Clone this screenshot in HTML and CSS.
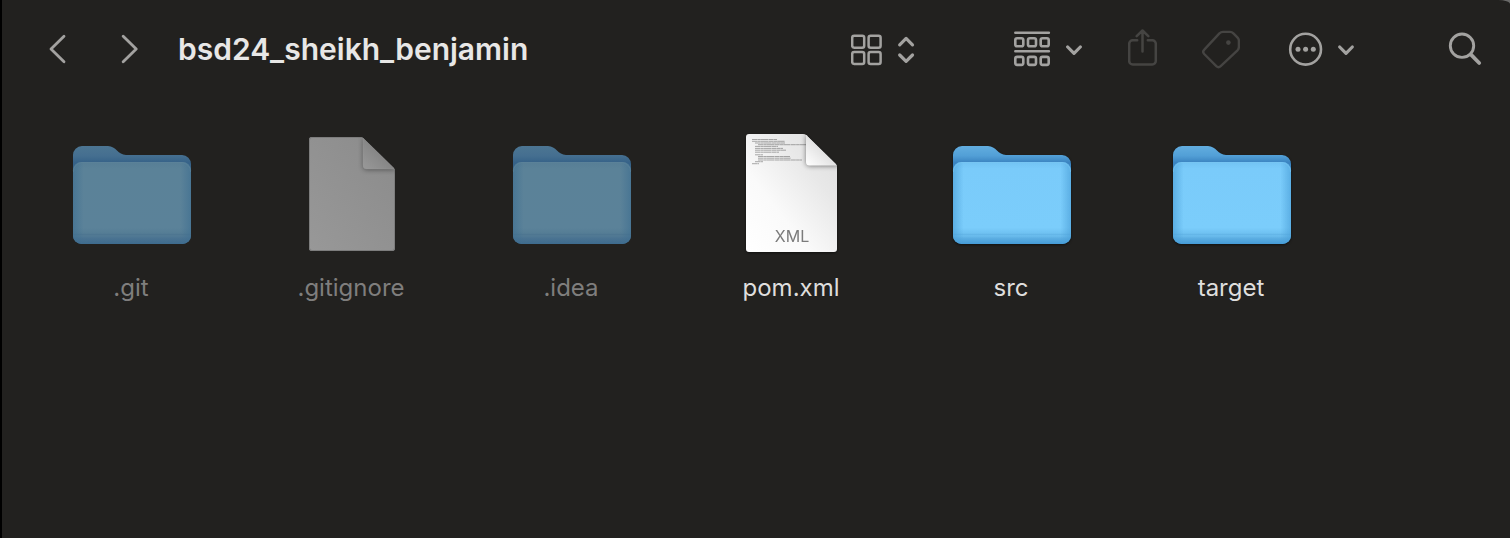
FILE: index.html
```html
<!DOCTYPE html>
<html lang="en">
<head>
<meta charset="utf-8">
<title>bsd24_sheikh_benjamin</title>
<link rel="stylesheet" href="styles.css">
</head>
<body>
<svg class="defs" aria-hidden="true">
  <defs>
    <linearGradient id="folder-back" x1="0" y1="0" x2="0" y2="1">
      <stop offset="0" stop-color="#62addf"/>
      <stop offset=".1" stop-color="#529fd6"/>
      <stop offset=".17" stop-color="#3a83c0"/>
      <stop offset="1" stop-color="#3a8ccb"/>
    </linearGradient>
    <linearGradient id="folder-front" x1="0" y1="0" x2="0" y2="1">
      <stop offset="0" stop-color="#72c3f3"/>
      <stop offset=".08" stop-color="#7acbfa"/>
      <stop offset=".8" stop-color="#7bcdfb"/>
      <stop offset=".87" stop-color="#6fc1f1"/>
      <stop offset=".88" stop-color="#62b4e6"/>
      <stop offset=".9" stop-color="#6bbdee"/>
      <stop offset=".93" stop-color="#5caee2"/>
      <stop offset="1" stop-color="#459bd6"/>
    </linearGradient>
    <linearGradient id="folder-sides">
      <stop offset="0" stop-color="#4a9fd8" stop-opacity=".65"/>
      <stop offset=".09" stop-color="#4a9fd8" stop-opacity="0"/>
      <stop offset=".91" stop-color="#4a9fd8" stop-opacity="0"/>
      <stop offset="1" stop-color="#4a9fd8" stop-opacity=".65"/>
    </linearGradient>
    <linearGradient id="dim-back" x1="0" y1="0" x2="0" y2="1">
      <stop offset="0" stop-color="#4c7592"/>
      <stop offset=".1" stop-color="#456f90"/>
      <stop offset=".17" stop-color="#366288"/>
      <stop offset="1" stop-color="#3b6a8e"/>
    </linearGradient>
    <linearGradient id="dim-front" x1="0" y1="0" x2="0" y2="1">
      <stop offset="0" stop-color="#577e95"/>
      <stop offset=".08" stop-color="#5b8298"/>
      <stop offset=".8" stop-color="#5b8299"/>
      <stop offset=".87" stop-color="#557d95"/>
      <stop offset=".88" stop-color="#4d7590"/>
      <stop offset=".9" stop-color="#527a94"/>
      <stop offset=".93" stop-color="#4a7391"/>
      <stop offset="1" stop-color="#3e6b8e"/>
    </linearGradient>
    <linearGradient id="dim-sides">
      <stop offset="0" stop-color="#3f6f91" stop-opacity=".65"/>
      <stop offset=".09" stop-color="#3f6f91" stop-opacity="0"/>
      <stop offset=".91" stop-color="#3f6f91" stop-opacity="0"/>
      <stop offset="1" stop-color="#3f6f91" stop-opacity=".65"/>
    </linearGradient>
    <linearGradient id="paper" x1="0" y1="1" x2="1" y2="0">
      <stop offset="0" stop-color="#ffffff"/>
      <stop offset=".35" stop-color="#fafafa"/>
      <stop offset=".7" stop-color="#e8e8e8"/>
      <stop offset="1" stop-color="#dedede"/>
    </linearGradient>
    <linearGradient id="curl" x1="0" y1="1" x2="1" y2="0">
      <stop offset="0" stop-color="#ffffff"/>
      <stop offset=".5" stop-color="#e2e2e2"/>
    </linearGradient>
    <linearGradient id="paper-dim" x1="0" y1="1" x2="1" y2="0">
      <stop offset="0" stop-color="#989898"/>
      <stop offset="1" stop-color="#8b8b8b"/>
    </linearGradient>
    <linearGradient id="curl-dim" x1="0" y1="1" x2="1" y2="0">
      <stop offset="0" stop-color="#999999"/>
      <stop offset=".5" stop-color="#868686"/>
    </linearGradient>
    <filter id="soft" x="-50%" y="-50%" width="200%" height="200%"><feGaussianBlur stdDeviation="2.4"/></filter>
    <clipPath id="clip-ignore"><path d="M24 7H72q2 0 3.500 1.300L105.700 37.500Q107 39 107 41V118a3 3 0 0 1-3 3H24a3 3 0 0 1-3-3V10a3 3 0 0 1 3-3Z"/></clipPath>
    <clipPath id="clip-xml"><path d="M21 4H75q2 0 3.500 1.300L107.700 33.700Q109 35 109 37V119a3 3 0 0 1-3 3H21a3 3 0 0 1-3-3V7a3 3 0 0 1 3-3Z"/></clipPath>
    <symbol id="folder" viewBox="0 0 128 128">
      <path fill="url(#folder-back)" d="M5 25a9 9 0 0 1 9-9H40C48 16 50 25 58 25H114a9 9 0 0 1 9 9V105a9 9 0 0 1-9 9H14a9 9 0 0 1-9-9Z"/>
      <rect fill="url(#folder-front)" x="5" y="32" width="118" height="82" rx="8.500"/>
      <rect fill="url(#folder-sides)" x="5" y="32" width="118" height="82" rx="8.500"/>
      <path fill="none" stroke="#79c6f2" stroke-opacity=".6" d="M5.500 42a9 9 0 0 1 8.500-9.500H114a9 9 0 0 1 8.500 9.500"/>
    </symbol>
    <symbol id="folder-dim" viewBox="0 0 128 128">
      <path fill="url(#dim-back)" d="M5 25a9 9 0 0 1 9-9H40C48 16 50 25 58 25H114a9 9 0 0 1 9 9V105a9 9 0 0 1-9 9H14a9 9 0 0 1-9-9Z"/>
      <rect fill="url(#dim-front)" x="5" y="32" width="118" height="82" rx="8.500"/>
      <rect fill="url(#dim-sides)" x="5" y="32" width="118" height="82" rx="8.500"/>
      <path fill="none" stroke="#5d849b" stroke-opacity=".6" d="M5.500 42a9 9 0 0 1 8.500-9.500H114a9 9 0 0 1 8.500 9.500"/>
    </symbol>
  </defs>
</svg>

<main class="window">
  <header class="toolbar">
    <nav class="history" aria-label="History">
      <button class="tool" aria-label="Back"><svg width="18" height="40" viewBox="0 0 18 40"><path class="line" d="M16 7.200 3 20l13 12.800" stroke-width="2.800"/></svg></button>
      <button class="tool" aria-label="Forward"><svg width="18" height="40" viewBox="0 0 18 40"><path class="line" d="M3.200 7.200 16.200 20l-13 12.800" stroke-width="2.800"/></svg></button>
    </nav>
    <h1 class="title">bsd24_sheikh_benjamin</h1>
    <div class="actions">
      <button class="tool view" aria-label="View as icons"><svg width="64" height="40" viewBox="0 0 64 40">
        <g class="line" stroke-width="2.500"><rect x="1.200" y="6.700" width="12" height="12" rx="2"/><rect x="17.600" y="6.700" width="12" height="12" rx="2"/><rect x="1.200" y="23.100" width="12" height="12" rx="2"/><rect x="17.600" y="23.100" width="12" height="12" rx="2"/></g>
        <path class="line" stroke-width="3.200" d="m48.700 15.800 6.400-6.400 6.400 6.400M48.700 26l6.400 6.400 6.400-6.400"/></svg></button>
      <button class="tool group" aria-label="Group items"><svg width="68" height="40" viewBox="0 0 68 40">
        <path class="line" stroke-width="2.500" d="M1.300 3.700h33.600M1.300 22.300h33.600"/>
        <g class="line" stroke-width="2.600"><rect x="1.300" y="9.300" width="8" height="8" rx="1.800"/><rect x="14" y="9.300" width="8" height="8" rx="1.800"/><rect x="26.700" y="9.300" width="8" height="8" rx="1.800"/><rect x="1.300" y="27.900" width="8" height="8" rx="1.800"/><rect x="14" y="27.900" width="8" height="8" rx="1.800"/><rect x="26.700" y="27.900" width="8" height="8" rx="1.800"/></g>
        <path class="line" stroke-width="3.200" d="m53.700 18 6.300 6.400 6.300-6.400"/></svg></button>
      <button class="tool share" aria-label="Share" disabled><svg width="30" height="40" viewBox="0 0 30 40">
        <path class="line" stroke-width="2.500" d="M9.200 11.300H4.700a3.500 3.500 0 0 0-3.500 3.500V32a3.500 3.500 0 0 0 3.500 3.500h19.600a3.500 3.500 0 0 0 3.500-3.500V14.800a3.500 3.500 0 0 0-3.500-3.500h-4.500M14.500 22.500V1.800M8.700 7.200l5.800-5.700 5.800 5.700"/></svg></button>
      <button class="tool tag" aria-label="Edit tags" disabled><svg width="38" height="40" viewBox="0 0 38 40">
        <path class="line" stroke-width="2.400" d="M17.400 4.400q1.600-1.500 3.600-1.500h7q2 0 3.400 1.400l4.200 4.300q1.300 1.400 1.300 3.200v6q0 2-1.400 3.500L18.700 37.200q-2.200 2-4.400-.1L2.200 25q-2.100-2.200.1-4.400Z"/><circle class="solid" cx="26.400" cy="13.600" r="2.300"/></svg></button>
      <button class="tool more" aria-label="More actions"><svg width="68" height="40" viewBox="0 0 68 40">
        <circle class="line" stroke-width="2.600" cx="17.600" cy="20.200" r="15.400"/><g class="solid"><circle cx="10" cy="20.200" r="2.500"/><circle cx="17.600" cy="20.200" r="2.500"/><circle cx="25.300" cy="20.200" r="2.500"/></g>
        <path class="line" stroke-width="3.200" d="m51.700 18 6.300 6.400 6.300-6.400"/></svg></button>
      <button class="tool search" aria-label="Search"><svg width="34" height="40" viewBox="0 0 34 40">
        <circle class="line" stroke-width="2.900" cx="14" cy="16.700" r="11.700"/><path class="line" stroke-width="3.800" d="m23 25.700 8.200 8.300"/></svg></button>
    </div>
  </header>

  <ul class="files">
    <li><button class="file hidden"><svg class="icon" viewBox="0 0 128 128"><use href="#folder-dim"/></svg><span class="name">.git</span></button></li>
    <li><button class="file hidden"><svg class="icon" viewBox="0 0 128 128">
      <g clip-path="url(#clip-ignore)">
        <path fill="url(#paper-dim)" d="M21 7H75L107 39V121H21Z"/>
        <path fill="none" stroke="#7d7d7d" stroke-width="2" d="M107 39V118a3 3 0 0 1-3 3H24a3 3 0 0 1-3-3V10a3 3 0 0 1 3-3H75"/>
        <path fill="#000" opacity=".4" filter="url(#soft)" d="M75 7v29a4 4 0 0 0 4 4h30Z"/>
        <path fill="url(#curl-dim)" stroke="#a0a0a0" stroke-opacity=".4" stroke-width=".6" d="M75 7v28.500a3.500 3.500 0 0 0 3.500 3.500H107Z"/>
      </g></svg><span class="name">.gitignore</span></button></li>
    <li><button class="file hidden"><svg class="icon" viewBox="0 0 128 128"><use href="#folder-dim"/></svg><span class="name">.idea</span></button></li>
    <li><button class="file"><svg class="icon" viewBox="0 0 128 128">
      <g clip-path="url(#clip-xml)">
        <path fill="url(#paper)" d="M18 4H78L109 35V122H18Z"/>
        <g fill="none" stroke="#444" stroke-opacity=".55" stroke-width=".8">
          <path stroke-dasharray="5 .3 3.500 .2 7 .4" d="M24 9.500h25M24 11.300h33M27 13h30M30 14.700h52M27 16.400h23M27 18.400h28M27 20.200h31M27 22.200h24M27 24.800h8M30 26.500h32M30 28.200h33M30 30h44M27 31.700h8M24 33.700h7"/>
        </g>
        <path fill="#000" opacity=".5" filter="url(#soft)" d="M78 4v28a4 4 0 0 0 4 4h30Z"/>
        <path fill="url(#curl)" d="M78 4v28a3.500 3.500 0 0 0 3.500 3.500H110Z"/>
      </g>
      <text class="badge" x="64" y="112" text-anchor="middle">XML</text></svg><span class="name">pom.xml</span></button></li>
    <li><button class="file"><svg class="icon" viewBox="0 0 128 128"><use href="#folder"/></svg><span class="name">src</span></button></li>
    <li><button class="file"><svg class="icon" viewBox="0 0 128 128"><use href="#folder"/></svg><span class="name">target</span></button></li>
  </ul>
</main>
</body>
</html>
```

FILE: styles.css
```css
* {
  box-sizing: border-box;
}

body {
  margin: 0;
  background: #6a6a69;
  font-family: Inter, "Liberation Sans", sans-serif;
}

button {
  padding: 0;
  border: 0;
  background: none;
  color: inherit;
  font: inherit;
}

.defs {
  position: absolute;
  width: 0;
  height: 0;
}

.window {
  min-height: 100vh;
  border-left: 2px solid #000;
  border-top-right-radius: 12px 4px;
  background: #22211f;
}

.toolbar {
  display: flex;
  align-items: center;
  height: 98px;
  padding: 0 28px 0 46px;
}

.history {
  display: flex;
  gap: 54px;
}

.tool {
  display: block;
  color: #a3a2a0;
}

.tool svg {
  display: block;
}

.tool:disabled {
  color: #454442;
}

.line {
  fill: none;
  stroke: currentColor;
  stroke-linecap: round;
  stroke-linejoin: round;
}

.solid {
  fill: currentColor;
}

.title {
  flex: 1;
  margin: 0 0 0 40px;
  color: #e8e7e6;
  font-size: 30px;
  font-weight: 600;
  line-height: 40px;
}

.actions {
  display: flex;
  align-items: center;
  gap: 46px;
}

.view {
  margin-right: 53px;
}

.tag {
  margin: 0 2px 0 -2px;
}

.search {
  margin-left: 46px;
}

.files {
  display: grid;
  grid-template-columns: repeat(auto-fill, 220px);
  margin: 0;
  padding: 32px 0 32px 20px;
  list-style: none;
}

.file {
  display: flex;
  flex-direction: column;
  align-items: center;
  gap: 14px;
  width: 100%;
  color: #dfdedd;
  font-size: 24px;
  line-height: 32px;
}

.name {
  padding-right: 2px;
}

.icon {
  width: 128px;
  height: 128px;
  filter: drop-shadow(0 1px 1px rgb(0 0 0 / 50%));
}

.hidden {
  color: #7f7e7d;
}

.hidden .icon {
  filter: none;
}

.badge {
  fill: #7b7b7b;
  font-size: 16px;
}
```
